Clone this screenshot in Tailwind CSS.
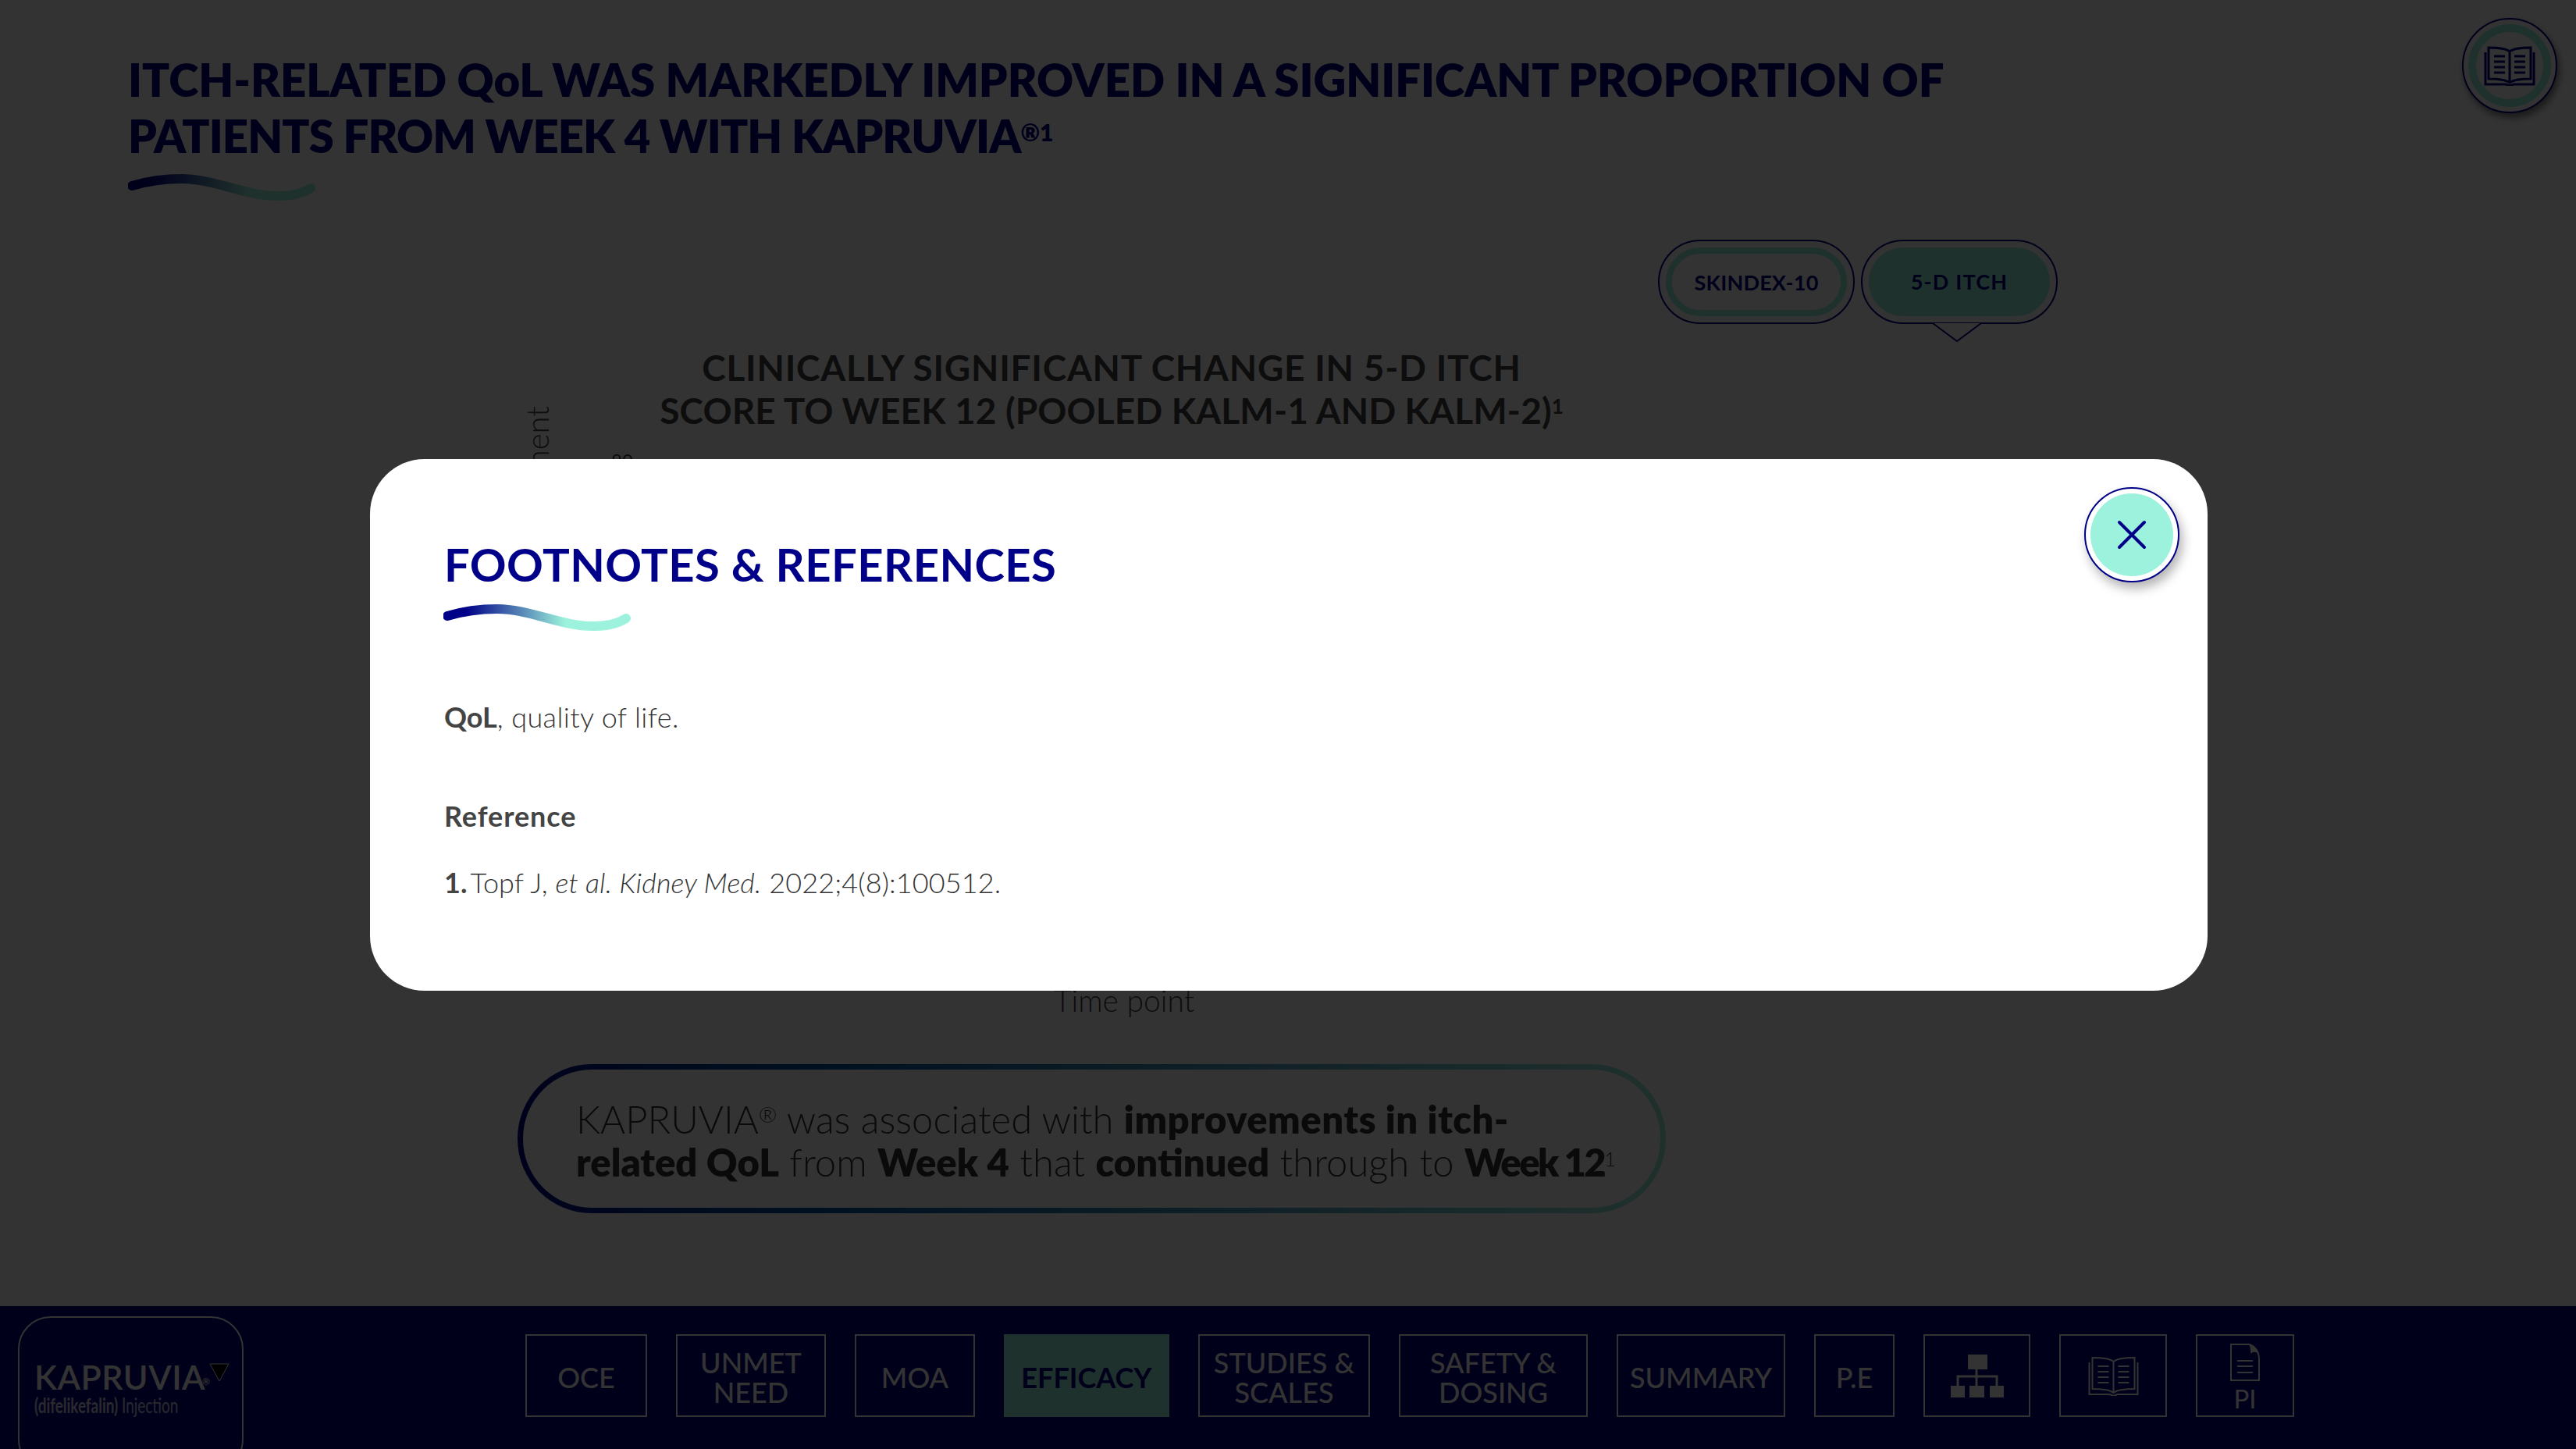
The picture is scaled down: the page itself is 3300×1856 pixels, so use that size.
<!doctype html>
<html>
<head>
<meta charset="utf-8">
<script src="https://cdn.jsdelivr.net/npm/@tailwindcss/browser@4"></script>
</head>
<body class="m-0 bg-white font-['Lato',sans-serif]">
<div class="relative w-[3300px] h-[1856px] overflow-hidden flex flex-col bg-white">
  <main class="relative flex-1 flex flex-col">
    <header class="flex justify-between pl-[164px] pr-[24px] pt-[23px]">
      <div class="pt-[43px]">
        <h1 class="text-[58px] leading-[72px] font-extrabold text-[#000088] w-[2500px]"><span class="tracking-[-0.05px]">ITCH-RELATED QoL WAS MARKEDLY IMPROVED IN A SIGNIFICANT PROPORTION OF</span><br><span class="tracking-[-0.9px]">PATIENTS FROM WEEK 4 WITH KAPRUVIA</span><sup class="text-[30px]">®1</sup></h1>
        <svg class="block mt-[9px]" width="245" height="38" viewBox="0 0 245 38"><defs><linearGradient id="sw0" gradientUnits="userSpaceOnUse" x1="0" x2="240" y1="0" y2="0"><stop offset="0.12" stop-color="#000088"/><stop offset="0.65" stop-color="#9cf2dc"/></linearGradient></defs><path d="M5 19C25 13 45 10 69 10C110 10 150 32 192 32C210 32 225 28 234 22" fill="none" stroke="url(#sw0)" stroke-width="12" stroke-linecap="round"/></svg>
      </div>
      <button class="w-[122px] h-[122px] rounded-full border-2 border-[#000088] bg-white flex items-center justify-center shadow-[3px_6px_10px_rgba(0,0,0,0.5)] p-[6px]">
        <span class="w-full h-full rounded-full border-[10px] border-[#9cf2dc] flex items-center justify-center">
          <svg width="66" height="51" viewBox="0 0 66 51" fill="none" stroke="#000088" stroke-width="3"><path d="M33 7C28 3 14 2 6 2V42C14 42 28 43 33 47C38 43 52 42 60 42V2C52 2 38 3 33 7ZM33 7V47"/><path d="M2 8V49H28L33 51L38 49H64V8"/><path d="M13 13H27M13 20H27M13 27H27M13 34H27M39 13H53M39 20H53M39 27H53M39 34H53" stroke-width="3"/></svg>
        </span>
      </button>
    </header>
    <div class="absolute left-[2124px] top-[307px] flex gap-[8px]">
      <div class="w-[252px] h-[108px] rounded-[54px] border-2 border-[#000088] p-[8px] bg-white">
        <div class="w-full h-full rounded-[46px] border-[8px] border-[#9cf2dc] flex items-center justify-center pt-[3px] text-[27px] font-bold tracking-[0.2px] text-[#000088]">SKINDEX-10</div>
      </div>
      <div class="relative w-[252px] h-[108px] rounded-[54px] border-2 border-[#000088] p-[8px] bg-white">
        <div class="w-full h-full rounded-[46px] bg-[#9cf2dc] flex items-center justify-center text-[27px] font-bold tracking-[1.2px] text-[#000088]">5-D ITCH</div>
        <svg class="absolute left-[89px] top-[104px]" width="64" height="26" viewBox="0 0 64 26"><path d="M1 1L32 24L63 1" fill="white" stroke="#000088" stroke-width="2"/></svg>
      </div>
    </div>
    <section class="absolute left-[674px] top-[443px] w-[1500px] flex flex-col items-center">
      <h2 class="text-[46px] leading-[55px] font-bold text-[#444] text-center"><span class="tracking-[0.75px]">CLINICALLY SIGNIFICANT CHANGE IN 5-D ITCH</span><br><span class="tracking-[0.1px]">SCORE TO WEEK 12 (POOLED KALM-1 AND KALM-2)</span><sup class="text-[26px]">1</sup></h2>
    </section>
    <p class="absolute left-[673px] top-[1278px] origin-top-left -rotate-90 w-[758px] text-[40px] leading-[30px] font-light text-[#444] whitespace-nowrap text-right">% of patients with meaningful improvement</p>
    <span class="absolute left-[783px] top-[578px] text-[24px] leading-[24px] text-[#444]">80</span>
    <p class="absolute left-[1350px] top-[1258px] text-[39px] leading-[46px] font-light text-[#444]">Time point</p>
    <div class="absolute left-[663px] top-[1363px] w-[1471px] h-[191px] rounded-[95px] p-[7px] bg-linear-to-r from-[#000088] to-[#9cf2dc]">
      <div class="w-full h-full rounded-[88px] bg-white pl-[68px] pt-[36px] text-[49px] leading-[55px] font-light text-[#333]">
        KAPRUVIA<sup class="text-[28px]">®</sup> was associated with <b class="font-extrabold tracking-[0.5px]">improvements in itch-<br><span class="tracking-[0px]">related QoL</span></b> from <b class="font-extrabold">Week 4</b> that <b class="font-extrabold">continued</b> through to <b class="font-extrabold tracking-[-2.6px]">Week 12</b><sup class="text-[26px]">1</sup>
      </div>
    </div>
  </main>
  <nav class="relative h-[183px] shrink-0 bg-[#000088] flex items-start text-white">
    <div class="absolute left-[23px] top-[13px] w-[289px] h-[200px] rounded-[42px] border-2 border-white pl-[19px] pt-[58px] bg-[#000088]">
      <div class="flex items-start">
        <span class="text-[43px] leading-[36px] tracking-[0.5px] font-semibold">KAPRUVIA<sup class="text-[12px] -ml-[4px]">®</sup></span>
        <svg class="-ml-[2px]" width="26" height="24" viewBox="0 0 26 24"><path d="M1 1H25L13 23Z" fill="black" stroke="white" stroke-width="1"/></svg>
      </div>
      <div class="mt-[2px] w-[270px] origin-left scale-x-[0.7] text-[27px] leading-[32px] whitespace-nowrap text-white/80"><span class="font-bold">(difelikefalin)</span> Injection</div>
    </div>
    <ul class="flex gap-[37px] pl-[673px] pt-[36px] text-[36px] leading-[38px] font-medium text-center">
      <li class="w-[156px] h-[106px] pt-[3px] border-2 border-white flex items-center justify-center">OCE</li>
      <li class="w-[192px] h-[106px] pt-[3px] border-2 border-white flex items-center justify-center">UNMET<br>NEED</li>
      <li class="w-[154px] h-[106px] pt-[3px] border-2 border-white flex items-center justify-center">MOA</li>
      <li class="w-[212px] h-[106px] pt-[3px] bg-[#9cf2dc] text-[#000088] font-bold flex items-center justify-center">EFFICACY</li>
      <li class="w-[220px] h-[106px] pt-[3px] border-2 border-white flex items-center justify-center">STUDIES &amp;<br>SCALES</li>
      <li class="w-[242px] h-[106px] pt-[3px] border-2 border-white flex items-center justify-center">SAFETY &amp;<br>DOSING</li>
      <li class="w-[216px] h-[106px] pt-[3px] border-2 border-white flex items-center justify-center">SUMMARY</li>
      <li class="w-[103px] h-[106px] pt-[3px] border-2 border-white flex items-center justify-center">P.E</li>
      <li class="w-[137px] h-[106px] border-2 border-white flex items-center justify-center">
        <svg width="68" height="55" viewBox="0 0 68 55" fill="white"><path d="M22 0H47V19H22ZM0 40H18V55H0ZM24 40H43V55H24ZM50 40H68V55H50Z"/><path d="M33 19V40M9 40V28H59V40" fill="none" stroke="white" stroke-width="3"/></svg>
      </li>
      <li class="w-[138px] h-[106px] border-2 border-white flex items-center justify-center">
        <svg width="67" height="51" viewBox="0 0 66 51" fill="none" stroke="white" stroke-width="2"><path d="M33 7C28 3 14 2 6 2V42C14 42 28 43 33 47C38 43 52 42 60 42V2C52 2 38 3 33 7ZM33 7V47"/><path d="M2 8V49H28L33 51L38 49H64V8"/><path d="M13 13H27M13 20H27M13 27H27M13 34H27M39 13H53M39 20H53M39 27H53M39 34H53"/></svg>
      </li>
      <li class="w-[126px] h-[106px] border-2 border-white flex flex-col items-center pt-[10px]">
        <svg width="38" height="48" viewBox="0 0 38 48"><path d="M1 1H24C32 3 37 11 37 20V47H1Z" fill="none" stroke="white" stroke-width="2"/><path d="M24 1C32 3 37 11 37 14C33 9 28 11 27 13C25 10 27 6 24 1Z" fill="white"/><path d="M9 22H29M9 29H29M9 37H29" fill="none" stroke="white" stroke-width="2"/></svg>
        <span class="mt-[5px] text-[33px] leading-[34px] font-normal">PI</span>
      </li>
    </ul>
  </nav>

  <div class="absolute inset-0 bg-black/80 flex items-center justify-center">
    <div class="relative ml-[2px] w-[2354px] h-[681px] rounded-[70px] bg-white pl-[95px] pt-[100px] text-[#444]">
      <h3 class="text-[58px] leading-[70px] font-bold tracking-[0.4px] text-[#000088]">FOOTNOTES &amp; REFERENCES</h3>
      <svg class="block mt-[12px] -ml-[1px]" width="245" height="38" viewBox="0 0 245 38"><defs><linearGradient id="sw1" gradientUnits="userSpaceOnUse" x1="0" x2="240" y1="0" y2="0"><stop offset="0.12" stop-color="#000088"/><stop offset="0.65" stop-color="#9cf2dc"/></linearGradient></defs><path d="M5 19C25 13 45 10 69 10C110 10 150 32 192 32C210 32 225 28 234 22" fill="none" stroke="url(#sw1)" stroke-width="12" stroke-linecap="round"/></svg>
      <p class="mt-[88px] text-[36px] leading-[44px] font-light text-[#333] tracking-[0.4px]"><b class="font-bold tracking-normal text-[#444]">QoL</b>, quality of life.</p>
      <p class="mt-[83px] text-[36px] leading-[44px] font-bold tracking-[0.9px]">Reference</p>
      <p class="mt-[41px] text-[36px] leading-[44px] font-light text-[#333] tracking-[0.1px]"><b class="font-bold text-[#444] -mr-[5px]">1.</b> Topf J, <i>et al. Kidney Med.</i> 2022;4(8):100512.</p>
      <button class="absolute left-[2196px] top-[36px] w-[122px] h-[122px] rounded-full border-2 border-[#000088] bg-white p-[6px] shadow-[4px_8px_14px_rgba(0,0,0,0.3)]">
        <span class="w-full h-full rounded-full bg-[#9cf2dc] flex items-center justify-center">
          <svg width="38" height="38" viewBox="0 0 38 38" fill="none" stroke="#000088" stroke-width="4" stroke-linecap="round"><path d="M3 3L35 35M35 3L3 35"/></svg>
        </span>
      </button>
    </div>
  </div>
</div>
</body>
</html>
